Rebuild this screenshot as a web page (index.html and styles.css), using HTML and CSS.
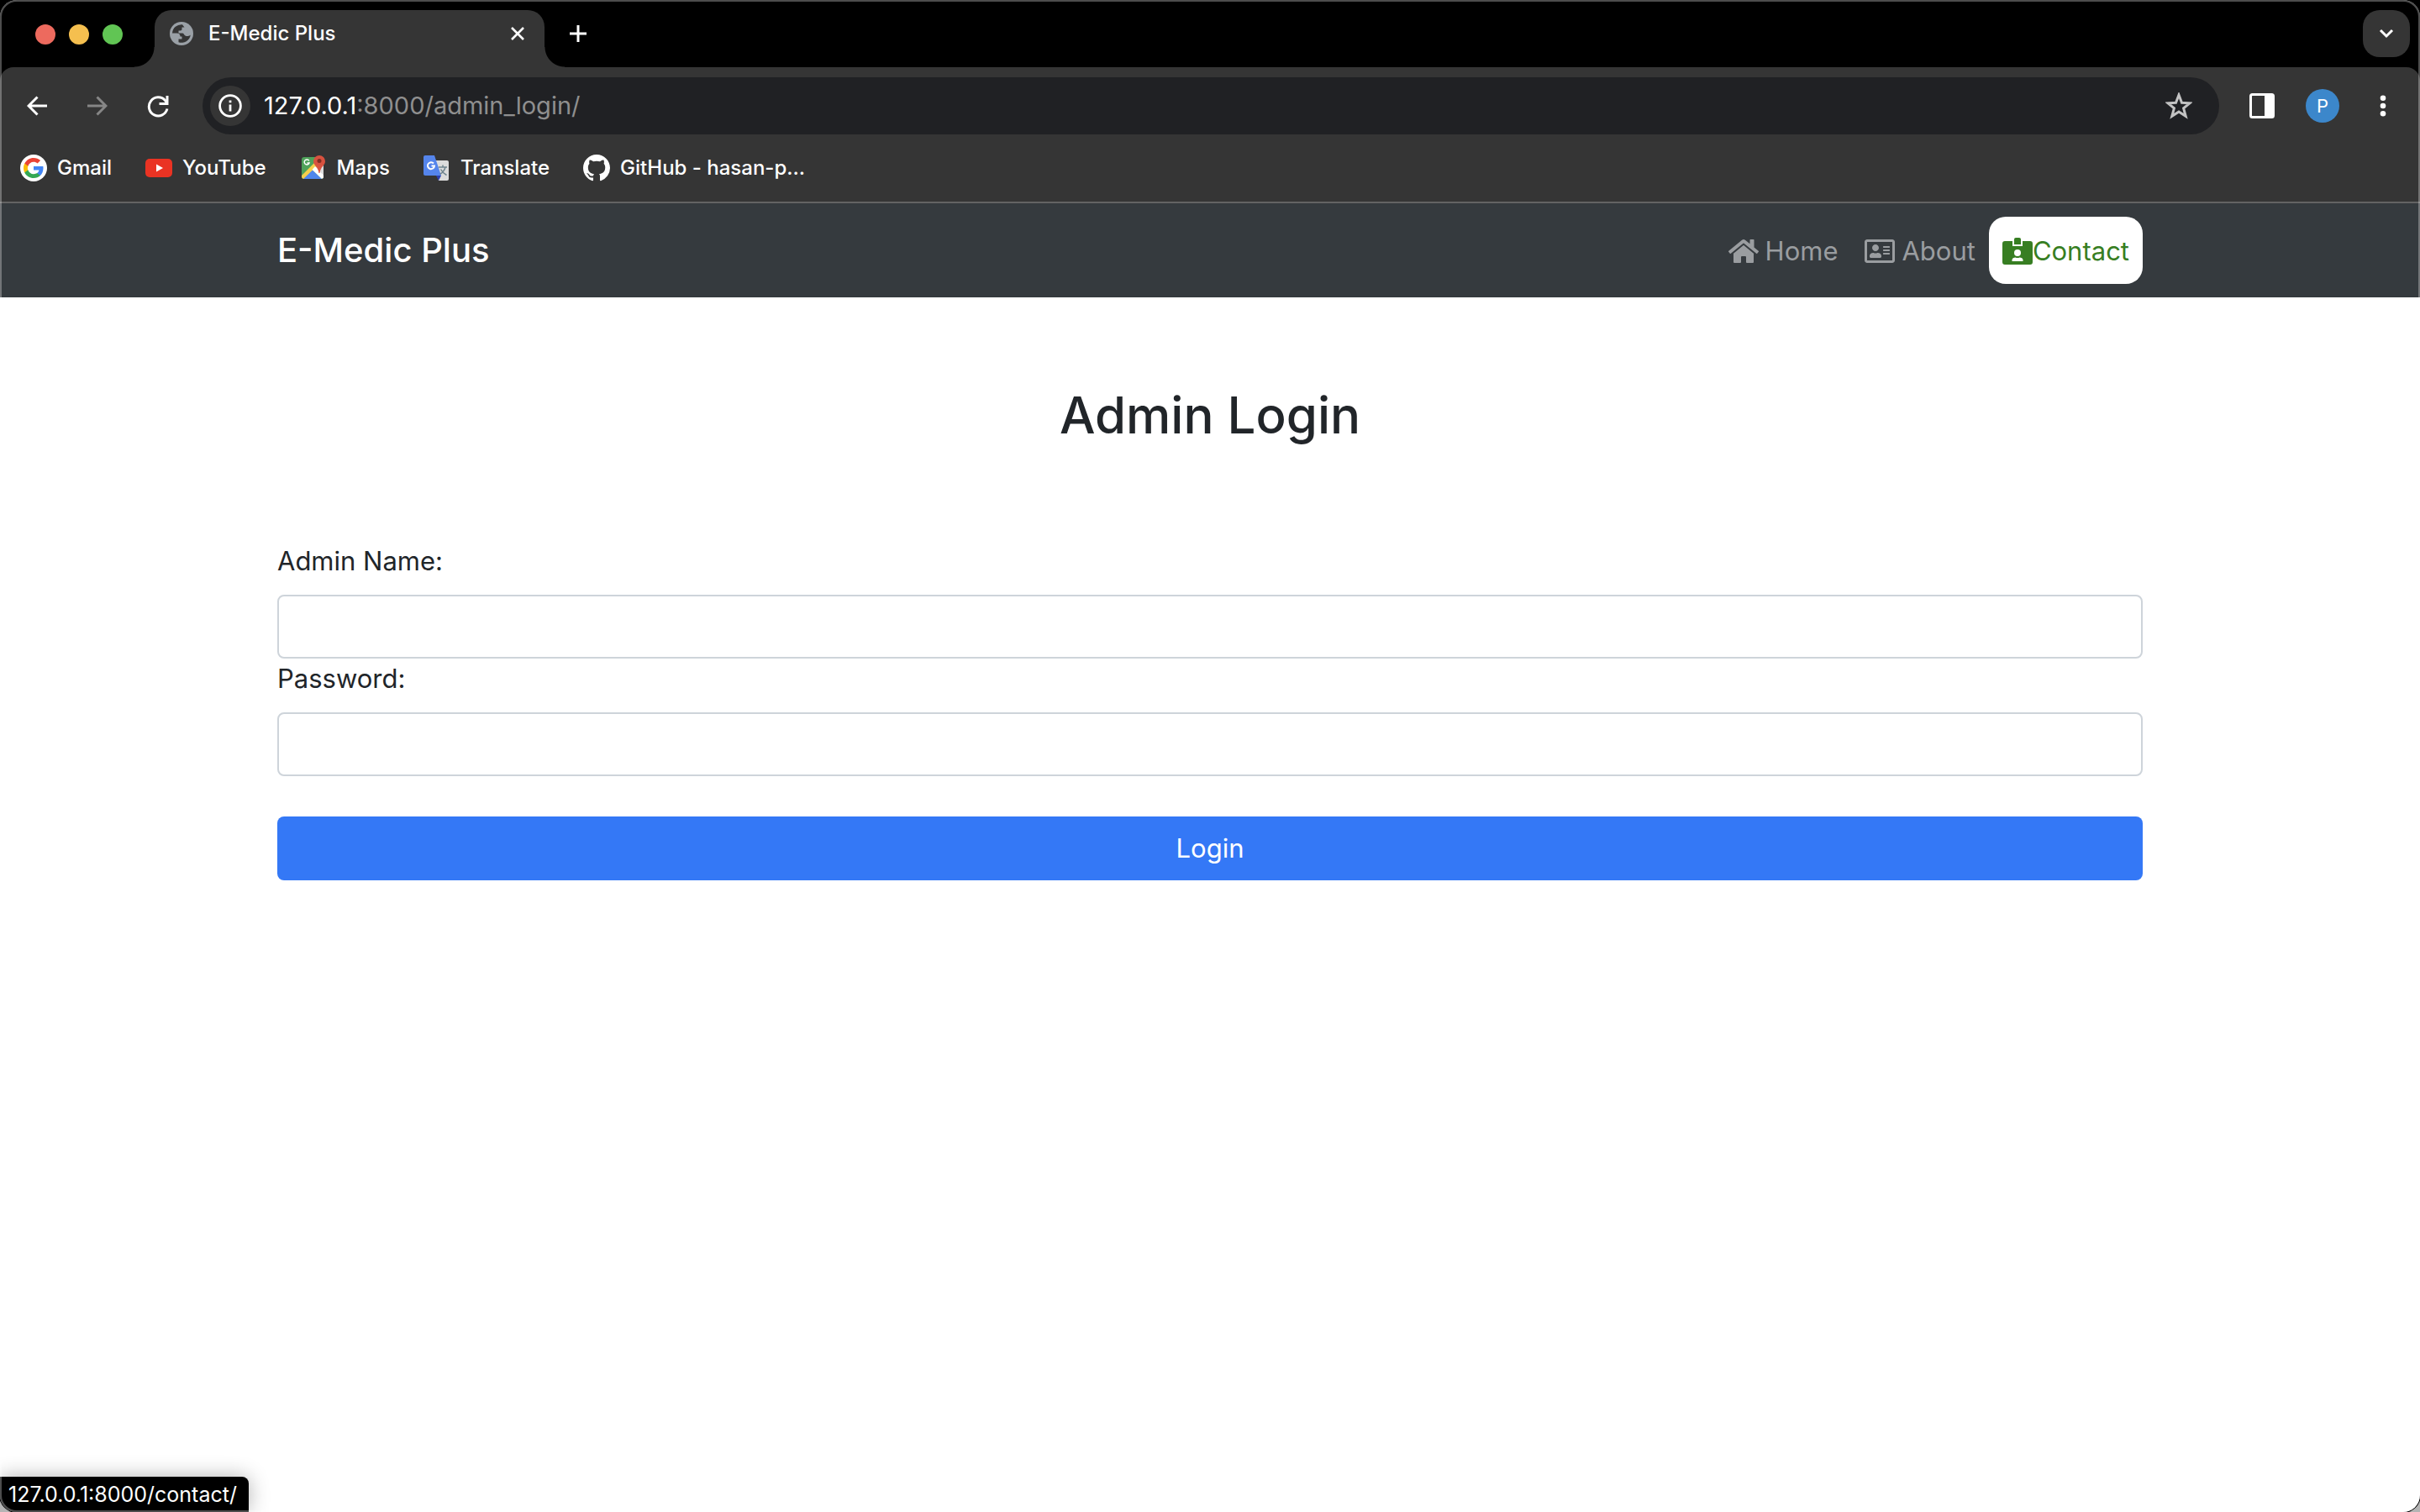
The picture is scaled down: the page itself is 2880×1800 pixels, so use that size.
FILE: index.html
```html
<!DOCTYPE html>
<html lang="en">
<head>
<meta charset="utf-8">
<title>E-Medic Plus</title>
<link rel="stylesheet" href="styles.css">
</head>
<body>
<div class="window">
  <header class="browser">
    <div class="tabstrip">
      <div class="lights">
        <span class="light light-red"></span><span class="light light-yellow"></span><span class="light light-green"></span>
      </div>
      <div class="tab">
        <svg class="favicon" viewBox="0 0 28 28"><circle cx="14" cy="14" r="14" fill="#9aa0a6"/><path d="M15 3.200A11 11 0 0 0 3 13.500H8.500C11 13.500 12.500 15 12.500 17.500H14.500V20.500H10.500V24.300A11 11 0 0 0 24.800 15.500C23.500 17 20.500 17.500 18.500 16.500C17 15.800 16.800 13.500 15 13.500H10.500V10.500H12.500C14 10.500 14.500 9.500 14.500 8.500V6.500H17.500Z" fill="#353535"/></svg>
        <span class="tab-title">E-Medic Plus</span>
        <button class="icon-button tab-close" aria-label="Close tab"><svg class="icon-16" viewBox="0 0 16 16"><path d="M1 1L15 15M15 1L1 15" stroke="#fff" stroke-width="2.600" fill="none"/></svg></button>
      </div>
      <button class="icon-button new-tab" aria-label="New tab"><svg class="icon-20" viewBox="0 0 20 20"><path d="M10 0V20M0 10H20" stroke="#fff" stroke-width="3" fill="none"/></svg></button>
      <button class="icon-button tab-search" aria-label="Search tabs"><svg class="icon-20" viewBox="0 0 20 20"><path d="M3 6L10 13L17 6" stroke="#fff" stroke-width="3" fill="none"/></svg></button>
    </div>
    <div class="toolbar">
      <button class="icon-button nav-button" aria-label="Back"><svg class="icon-24" viewBox="0 0 24 24"><path d="M24 12H2M12.500 1.500L2 12L12.500 22.500" stroke="#fff" stroke-width="3" fill="none"/></svg></button>
      <button class="icon-button nav-button" aria-label="Forward"><svg class="icon-24" viewBox="0 0 24 24"><path d="M0 12H22M11.500 1.500L22 12L11.500 22.500" stroke="#868686" stroke-width="3" fill="none"/></svg></button>
      <button class="icon-button nav-button" aria-label="Reload"><svg class="icon-28" viewBox="0 0 28 28"><path d="M25 17.500A11 11 0 1 1 22.500 7.500L24.500 10" stroke="#fff" stroke-width="3" fill="none"/><path d="M25 2V11.500H15.500" stroke="#fff" stroke-width="3" fill="none"/></svg></button>
      <div class="omnibox">
        <button class="icon-button site-info" aria-label="Site information"><svg class="icon-28" viewBox="0 0 28 28"><circle cx="14" cy="14" r="12.400" stroke="#fff" stroke-width="2.800" fill="none"/><path d="M14 12.500V20.500M14 7.500V10.200" stroke="#fff" stroke-width="2.800"/></svg></button>
        <span class="url">127.0.0.1<span class="url-path">:8000/admin_login/</span></span>
        <button class="icon-button star" aria-label="Bookmark this page"><svg class="icon-32" viewBox="0 0 32 32"><path d="M16 3L19.500 12.300L29 12.800L21.600 18.800L24.200 28.300L16 23L7.800 28.300L10.400 18.800L3 12.800L12.500 12.300Z" stroke="#c3c3c3" stroke-width="3" fill="none"/></svg></button>
      </div>
      <button class="icon-button side-panel" aria-label="Side panel"><svg class="icon-30" viewBox="0 0 30 30"><rect x="1.500" y="1.500" width="27" height="27" rx="2" stroke="#fff" stroke-width="3" fill="none"/><path d="M18 2H28V28H18Z" fill="#fff"/></svg></button>
      <button class="avatar" aria-label="Profile">P</button>
      <button class="icon-button menu" aria-label="Menu"><svg class="icon-28" viewBox="0 0 28 28"><g fill="#fff"><circle cx="14" cy="4.700" r="3.300"/><circle cx="14" cy="14" r="3.300"/><circle cx="14" cy="23.300" r="3.300"/></g></svg></button>
    </div>
    <nav class="bookmarks" aria-label="Bookmarks">
      <a class="bookmark" href="#"><svg class="icon-32" viewBox="0 0 32 32"><circle cx="16" cy="16" r="16" fill="#fff"/><g transform="translate(4 4)"><path d="M23.500 12.300c0-.8-.1-1.600-.2-2.300H12v4.500h6.500c-.3 1.500-1.100 2.800-2.400 3.600v3h3.900c2.200-2.100 3.500-5.200 3.500-8.800z" fill="#4285f4"/><path d="M12 24c3.200 0 6-1.100 8-2.900l-3.900-3c-1.100.7-2.500 1.200-4.100 1.200-3.100 0-5.800-2.100-6.700-5H1.300v3.100C3.300 21.300 7.300 24 12 24z" fill="#34a853"/><path d="M5.300 14.300c-.3-.7-.4-1.500-.4-2.300s.1-1.600.4-2.300V6.600H1.300C.5 8.200 0 10.100 0 12s.5 3.800 1.300 5.400z" fill="#fbbc05"/><path d="M12 4.700c1.800 0 3.400.6 4.600 1.800L20.100 3C17.900 1.100 15.200 0 12 0 7.300 0 3.300 2.700 1.300 6.600l4 3.100c.9-2.900 3.600-5 6.700-5z" fill="#ea4335"/></g></svg>Gmail</a>
      <a class="bookmark" href="#"><svg class="icon-32" viewBox="0 0 32 32"><rect x="0" y="5" width="32" height="22" rx="5" fill="#ea3323"/><path d="M13 11.500L21 16L13 20.500Z" fill="#fff"/></svg>YouTube</a>
      <a class="bookmark" href="#"><svg class="icon-32" viewBox="0 0 32 32"><clipPath id="map"><rect x="2" y="3" width="26" height="26" rx="3"/></clipPath><g clip-path="url(#map)"><rect x="2" y="3" width="26" height="26" fill="#4fa25a"/><path d="M15 16L28 3V29Z" fill="#dcdcdc"/><path d="M0 27L17 10L21 14L5 30H0Z" fill="#f6cf4c"/><path d="M4 29L15 18.500L26 29Z" fill="#5086ec"/><path d="M14.500 18L18 14L30 27L28 31Z" fill="#fff"/></g><path d="M23 1a7 7 0 0 1 7 7c0 5-5.500 6-6.500 14h-1C21.500 14 16 13 16 8a7 7 0 0 1 7-7z" fill="#d8523f"/><circle cx="23" cy="7.500" r="2.500" fill="#812d22"/><path d="M10.800 7.500A3 3 0 1 0 11 10H8.500" stroke="#fff" stroke-width="1.500" fill="none"/></svg>Maps</a>
      <a class="bookmark" href="#"><svg class="icon-32" viewBox="0 0 32 32"><path d="M13 7H28a2 2 0 0 1 2 2V29a2 2 0 0 1-2 2H18Z" fill="#dcdcdc"/><path d="M15 25H21L18 31Z" fill="#2b3fae"/><path d="M2 1H13L21 25H2a2 2 0 0 1-2-2V3a2 2 0 0 1 2-2Z" fill="#5585ec"/><path d="M12 10.500A4 4 0 1 0 13 13.500H9.500" stroke="#fff" stroke-width="2" fill="none"/><path d="M18 15H28M23 12.500V15M26 15C25 19 22 22 19.500 23.500M20.500 17.500C22 20.500 25 23 27.500 24.500" stroke="#70858f" stroke-width="1.500" fill="none"/></svg>Translate</a>
      <a class="bookmark" href="#"><svg class="icon-32" viewBox="0 0 16 16"><path fill="#fff" d="M8 0C3.580 0 0 3.580 0 8c0 3.540 2.290 6.530 5.470 7.590.4.070.55-.17.55-.38 0-.19-.01-.82-.01-1.490-2.010.37-2.530-.49-2.690-.94-.09-.23-.48-.94-.82-1.130-.28-.15-.68-.52-.01-.53.630-.01 1.080.58 1.230.82.720 1.210 1.870.87 2.330.66.070-.52.280-.87.510-1.070-1.780-.2-3.640-.89-3.640-3.950 0-.87.310-1.590.82-2.150-.08-.2-.36-1.020.08-2.120 0 0 .67-.21 2.200.82.640-.18 1.320-.27 2-.27s1.360.09 2 .27c1.530-1.040 2.200-.82 2.200-.82.440 1.100.16 1.920.08 2.120.51.560.82 1.270.82 2.150 0 3.070-1.870 3.750-3.650 3.950.29.250.54.730.54 1.480 0 1.070-.01 1.930-.01 2.200 0 .21.150.46.550.38A8.010 8.010 0 0 0 16 8c0-4.420-3.580-8-8-8z"/></svg>GitHub - hasan-p...</a>
    </nav>
  </header>
  <nav class="navbar">
    <div class="container navbar-row">
      <a class="brand" href="#">E-Medic Plus</a>
      <div class="links">
        <a class="link" href="#"><svg class="icon-nav" viewBox="0 0 576 512"><path fill="currentColor" d="M280.370 148.260L96 300.110V464a16 16 0 0 0 16 16l112.060-.29a16 16 0 0 0 15.920-16V368a16 16 0 0 1 16-16h64a16 16 0 0 1 16 16v95.640a16 16 0 0 0 16 16.050L464 480a16 16 0 0 0 16-16V300L295.670 148.260a12.190 12.190 0 0 0-15.300 0zM571.600 251.470L488 182.560V44.050a12 12 0 0 0-12-12h-56a12 12 0 0 0-12 12v72.610L318.470 43a48 48 0 0 0-61 0L4.340 251.470a12 12 0 0 0-1.600 16.900l25.500 31A12 12 0 0 0 45.150 301l235.220-193.740a12.190 12.190 0 0 1 15.300 0L530.900 301a12 12 0 0 0 16.900-1.600l25.500-31a12 12 0 0 0-1.700-16.930z"/></svg>Home</a>
        <a class="link" href="#"><svg class="icon-nav" viewBox="0 0 576 512"><path fill="currentColor" d="M528 32H48C21.500 32 0 53.500 0 80v352c0 26.500 21.500 48 48 48h480c26.500 0 48-21.500 48-48V80c0-26.500-21.500-48-48-48zm0 400H48V80h480v352zM208 256c35.300 0 64-28.700 64-64s-28.700-64-64-64-64 28.700-64 64 28.700 64 64 64zm-89.600 128h179.200c12.400 0 22.400-8.600 22.400-19.200v-19.200c0-31.800-30.100-57.600-67.200-57.600-10.800 0-18.700 8-44.800 8-26.900 0-33.400-8-44.800-8-37.100 0-67.200 25.800-67.200 57.600v19.200c0 10.600 10 19.200 22.400 19.200zM360 320h112c4.400 0 8-3.600 8-8v-16c0-4.400-3.600-8-8-8H360c-4.400 0-8 3.600-8 8v16c0 4.400 3.600 8 8 8zm0-64h112c4.400 0 8-3.600 8-8v-16c0-4.400-3.600-8-8-8H360c-4.400 0-8 3.600-8 8v16c0 4.400 3.600 8 8 8zm0-64h112c4.400 0 8-3.600 8-8v-16c0-4.400-3.600-8-8-8H360c-4.400 0-8 3.600-8 8v16c0 4.400 3.600 8 8 8z"/></svg>About</a>
        <a class="link link-active" href="#"><svg class="icon-nav" viewBox="0 0 36 32"><path fill="currentColor" d="M3 4H12V10H24V4H33a3 3 0 0 1 3 3V29a3 3 0 0 1-3 3H3a3 3 0 0 1-3-3V7a3 3 0 0 1 3-3Z"/><path fill="currentColor" d="M16 0H20a2 2 0 0 1 2 2V8H14V2A2 2 0 0 1 16 0Z"/><circle cx="18" cy="18" r="4" fill="#fff"/><path fill="#fff" d="M11.500 28V26.500C11.500 24.500 13.500 23.500 15.500 23.500C17 24.200 19 24.200 20.500 23.500C22.500 23.500 24.500 24.500 24.500 26.500V28Z"/></svg>Contact</a>
      </div>
    </div>
  </nav>
  <main class="container content">
    <h1 class="title">Admin Login</h1>
    <form class="form">
      <label class="label" for="name">Admin Name:</label>
      <input class="input" id="name" type="text">
      <label class="label" for="password">Password:</label>
      <input class="input" id="password" type="password">
      <button class="submit" type="button">Login</button>
    </form>
  </main>
  <div class="status">127.0.0.1:8000/contact/</div>
</div>
</body>
</html>
```
FILE: styles.css
```css
* { box-sizing: border-box; }
body { margin: 0; background: linear-gradient(#000 50%, #b4b4b4 50%); font-family: Inter, "Liberation Sans", sans-serif; color: #212529; }
button { border: 0; padding: 0; margin: 0; background: none; font-family: inherit; }
a { text-decoration: none; color: inherit; }
svg { display: block; flex: none; }

.window { position: relative; min-height: 100vh; background: #fff; border-radius: 20px; overflow: hidden; box-shadow: 0 0 0 1px #000; }
/* thin light outline around the window frame */
.window::after { content: ""; position: absolute; inset: 0; border: 2px solid rgba(255, 255, 255, 0.3); border-radius: 20px; pointer-events: none; }

.browser { background: #000; border-bottom: 2px solid #636363; color: #fff; }
.tabstrip { display: flex; height: 80px; padding: 12px 12px 0 42px; }
.lights { display: flex; gap: 16px; width: 142px; padding-top: 17px; }
.light { width: 24px; height: 24px; border-radius: 50%; }
.light-red { background: #ed6a5e; }
.light-yellow { background: #f5bf4f; }
.light-green { background: #61c554; }
.tab { position: relative; display: flex; align-items: center; width: 464px; height: 68px; padding: 0 24px 12px 18px; gap: 18px; background: #353535; border-radius: 20px 20px 0 0; }
.tab::before, .tab::after { content: ""; position: absolute; bottom: 0; width: 24px; height: 24px; }
.tab::before { right: 100%; background: radial-gradient(circle at 0 0, #000 23px, #353535 24px); }
.tab::after { left: 100%; background: radial-gradient(circle at 100% 0, #000 23px, #353535 24px); }
.favicon { width: 28px; height: 28px; }
.tab-title { flex: 1; font-size: 24px; font-weight: 500; line-height: 32px; }
.icon-button { display: flex; align-items: center; justify-content: center; flex: none; }
.new-tab { width: 80px; height: 56px; }
.tab-search { width: 56px; height: 56px; margin-left: auto; border-radius: 20px; background: #353535; }
.icon-16 { width: 16px; height: 16px; }
.icon-20 { width: 20px; height: 20px; }
.icon-24 { width: 24px; height: 24px; }
.icon-28 { width: 28px; height: 28px; }
.icon-30 { width: 30px; height: 30px; }
.icon-32 { width: 32px; height: 32px; }

.toolbar { display: flex; align-items: center; height: 92px; padding: 0 30px 0 8px; background: #353535; border-radius: 16px 16px 0 0; }
.nav-button { width: 72px; height: 56px; }
.omnibox { display: flex; align-items: center; flex: 1; height: 68px; margin: 0 36px 0 17px; padding: 0 32px 0 9px; border-radius: 34px; background: #202124; }
.site-info { width: 48px; height: 48px; border-radius: 50%; background: #353535; }
.url { flex: 1; margin-left: 16px; font-size: 29px; line-height: 36px; }
.url-path { color: #8f8f8f; }
.avatar { width: 40px; height: 40px; margin: 0 38px 0 37px; border-radius: 50%; background: #3c87cb; color: #fff; font-size: 22px; line-height: 40px; }

.bookmarks { display: flex; gap: 40px; padding: 12px 24px 24px; background: #353535; }
.bookmark { display: flex; align-items: center; gap: 12px; font-size: 24px; font-weight: 500; line-height: 32px; }

.navbar { background: #353a3e; padding: 16px 0; }
.container { width: 100%; max-width: 2280px; margin: 0 auto; padding: 0 30px; }
.navbar-row { display: flex; align-items: center; justify-content: space-between; }
.brand { color: #fff; font-size: 40px; font-weight: 500; line-height: 60px; }
.links { display: flex; font-size: 31px; line-height: 48px; color: #9a9da0; }
.link { display: flex; align-items: center; gap: 8px; padding: 17px 16px 15px; }
.link-active { gap: 0; border-radius: 20px; background: #fff; color: #377e22; }
.icon-nav { width: 36px; height: 32px; }

.content { padding-top: 102px; }
.title { margin: 0; text-align: center; font-size: 60px; font-weight: 500; line-height: 76px; }
.form { padding-top: 112px; }
.label { display: block; margin-bottom: 16px; font-size: 31px; line-height: 48px; }
.input { display: block; width: 100%; height: 76px; padding: 12px 24px; border: 2px solid #ced4da; border-radius: 8px; background: #fff; font: inherit; font-size: 31px; }
.submit { display: block; width: 100%; height: 76px; margin-top: 48px; border-radius: 8px; background: #3478f6; color: #fff; font-size: 31px; line-height: 48px; }

.status { position: absolute; left: 0; bottom: 0; padding: 5px 14px 5px 10px; border-radius: 0 8px 0 0; background: #000; color: #fff; font-size: 25px; line-height: 32px; box-shadow: 0 0 24px rgba(0, 0, 0, 0.3); }
```
